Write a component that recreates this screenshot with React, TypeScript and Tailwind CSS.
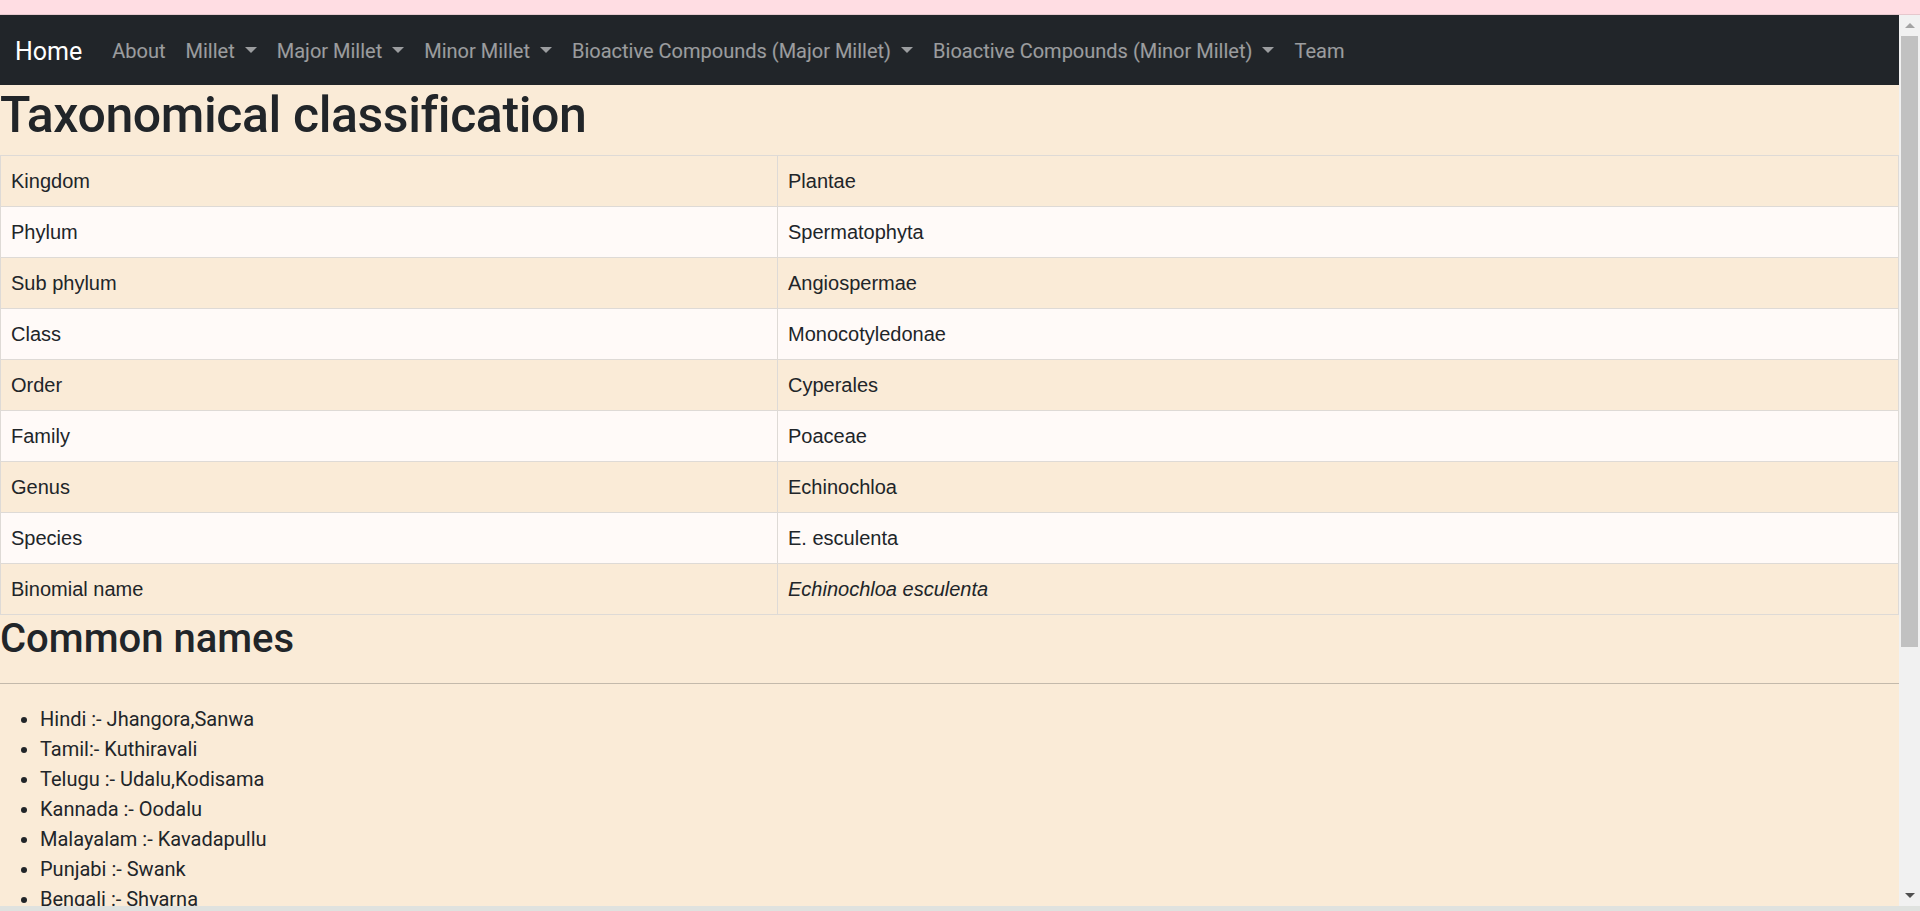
import React from "react";

const taxonomy = [
  ["Kingdom", "Plantae"],
  ["Phylum", "Spermatophyta"],
  ["Sub phylum", "Angiospermae"],
  ["Class", "Monocotyledonae"],
  ["Order", "Cyperales"],
  ["Family", "Poaceae"],
  ["Genus", "Echinochloa"],
  ["Species", "E. esculenta"],
  ["Binomial name", "Echinochloa esculenta"],
];

const commonNames = [
  "Hindi :- Jhangora,Sanwa",
  "Tamil:- Kuthiravali",
  "Telugu :- Udalu,Kodisama",
  "Kannada :- Oodalu",
  "Malayalam :- Kavadapullu",
  "Punjabi :- Swank",
  "Bengali :- Shyarna",
];

const navLinks = [
  { label: "About", dropdown: false },
  { label: "Millet", dropdown: true },
  { label: "Major Millet", dropdown: true },
  { label: "Minor Millet", dropdown: true },
  { label: "Bioactive Compounds (Major Millet)", dropdown: true },
  { label: "Bioactive Compounds (Minor Millet)", dropdown: true },
  { label: "Team", dropdown: false },
];

const Caret = () => (
  <span className="inline-block ml-[10px] align-[5px] border-t-[6px] border-x-[6px] border-b-0 border-t-current border-x-transparent" />
);

const Navbar = () => {
  return (
    <nav className="flex items-center h-[70px] bg-[#212529] px-[15px] pt-[2px] shrink-0">
      <a className="text-white text-[25px] leading-[37px] mr-[20px]">Home</a>
      <ul className="flex items-center">
        {navLinks.map((link) => (
          <li key={link.label}>
            <a className="block px-[10px] text-[20px] leading-[30px] text-white/55">
              {link.label}
              {link.dropdown && <Caret />}
            </a>
          </li>
        ))}
      </ul>
    </nav>
  );
};

const Scrollbar = () => (
  <div className="w-[21px] shrink-0 bg-[#f1f1f1] flex flex-col items-center">
    <div className="h-[21px] flex items-center justify-center">
      <span className="inline-block border-b-[5px] border-x-[5px] border-t-0 border-b-[#a3a3a3] border-x-transparent" />
    </div>
    <div className="w-[17px] h-[611px] bg-[#c1c1c1]" />
    <div className="flex-1" />
    <div className="h-[21px] flex items-center justify-center">
      <span className="inline-block border-t-[5px] border-x-[5px] border-b-0 border-t-[#505050] border-x-transparent" />
    </div>
  </div>
);

export default function App() {
  return (
    <div className="h-[911px] flex flex-col overflow-hidden bg-[#faebd7] text-[#212529] font-['Segoe_UI',Roboto,sans-serif]">
      <div className="h-[15px] shrink-0 bg-[#ffdde3] border-b border-[#e6c8cd]" />
      <div className="flex flex-1 min-h-0">
        <div className="flex-1 flex flex-col min-w-0">
          <Navbar />
          <main className="flex-1 overflow-hidden">
            <h1 className="text-[50px] leading-[60px] font-medium tracking-[-0.4px] mb-[10px]">
              Taxonomical classification
            </h1>
            <table className="w-full border-collapse font-['Liberation_Sans',Arial,sans-serif] text-[20px] leading-[30px]">
              <tbody>
                {taxonomy.map(([rank, value], i) => (
                  <tr key={rank} className={i % 2 === 1 ? "bg-[#fffaf8]" : ""}>
                    <td className="w-[777px] border border-[#dedad6] px-[10px] py-[10px]">
                      {rank}
                    </td>
                    <td
                      className={
                        "border border-[#dedad6] px-[10px] py-[10px]" +
                        (rank === "Binomial name" ? " italic" : "")
                      }
                    >
                      {value}
                    </td>
                  </tr>
                ))}
              </tbody>
            </table>
            <h2 className="text-[40px] leading-[48px] font-medium">Common names</h2>
            <hr className="mt-[20px] mb-[20px] border-t border-[#212529]/25" />
            <ul className="list-disc pl-[40px] text-[20px] leading-[30px]">
              {commonNames.map((name) => (
                <li key={name}>{name}</li>
              ))}
            </ul>
          </main>
        </div>
        <Scrollbar />
      </div>
      <div className="h-[5px] shrink-0 bg-[#dfe2df]" />
    </div>
  );
}
